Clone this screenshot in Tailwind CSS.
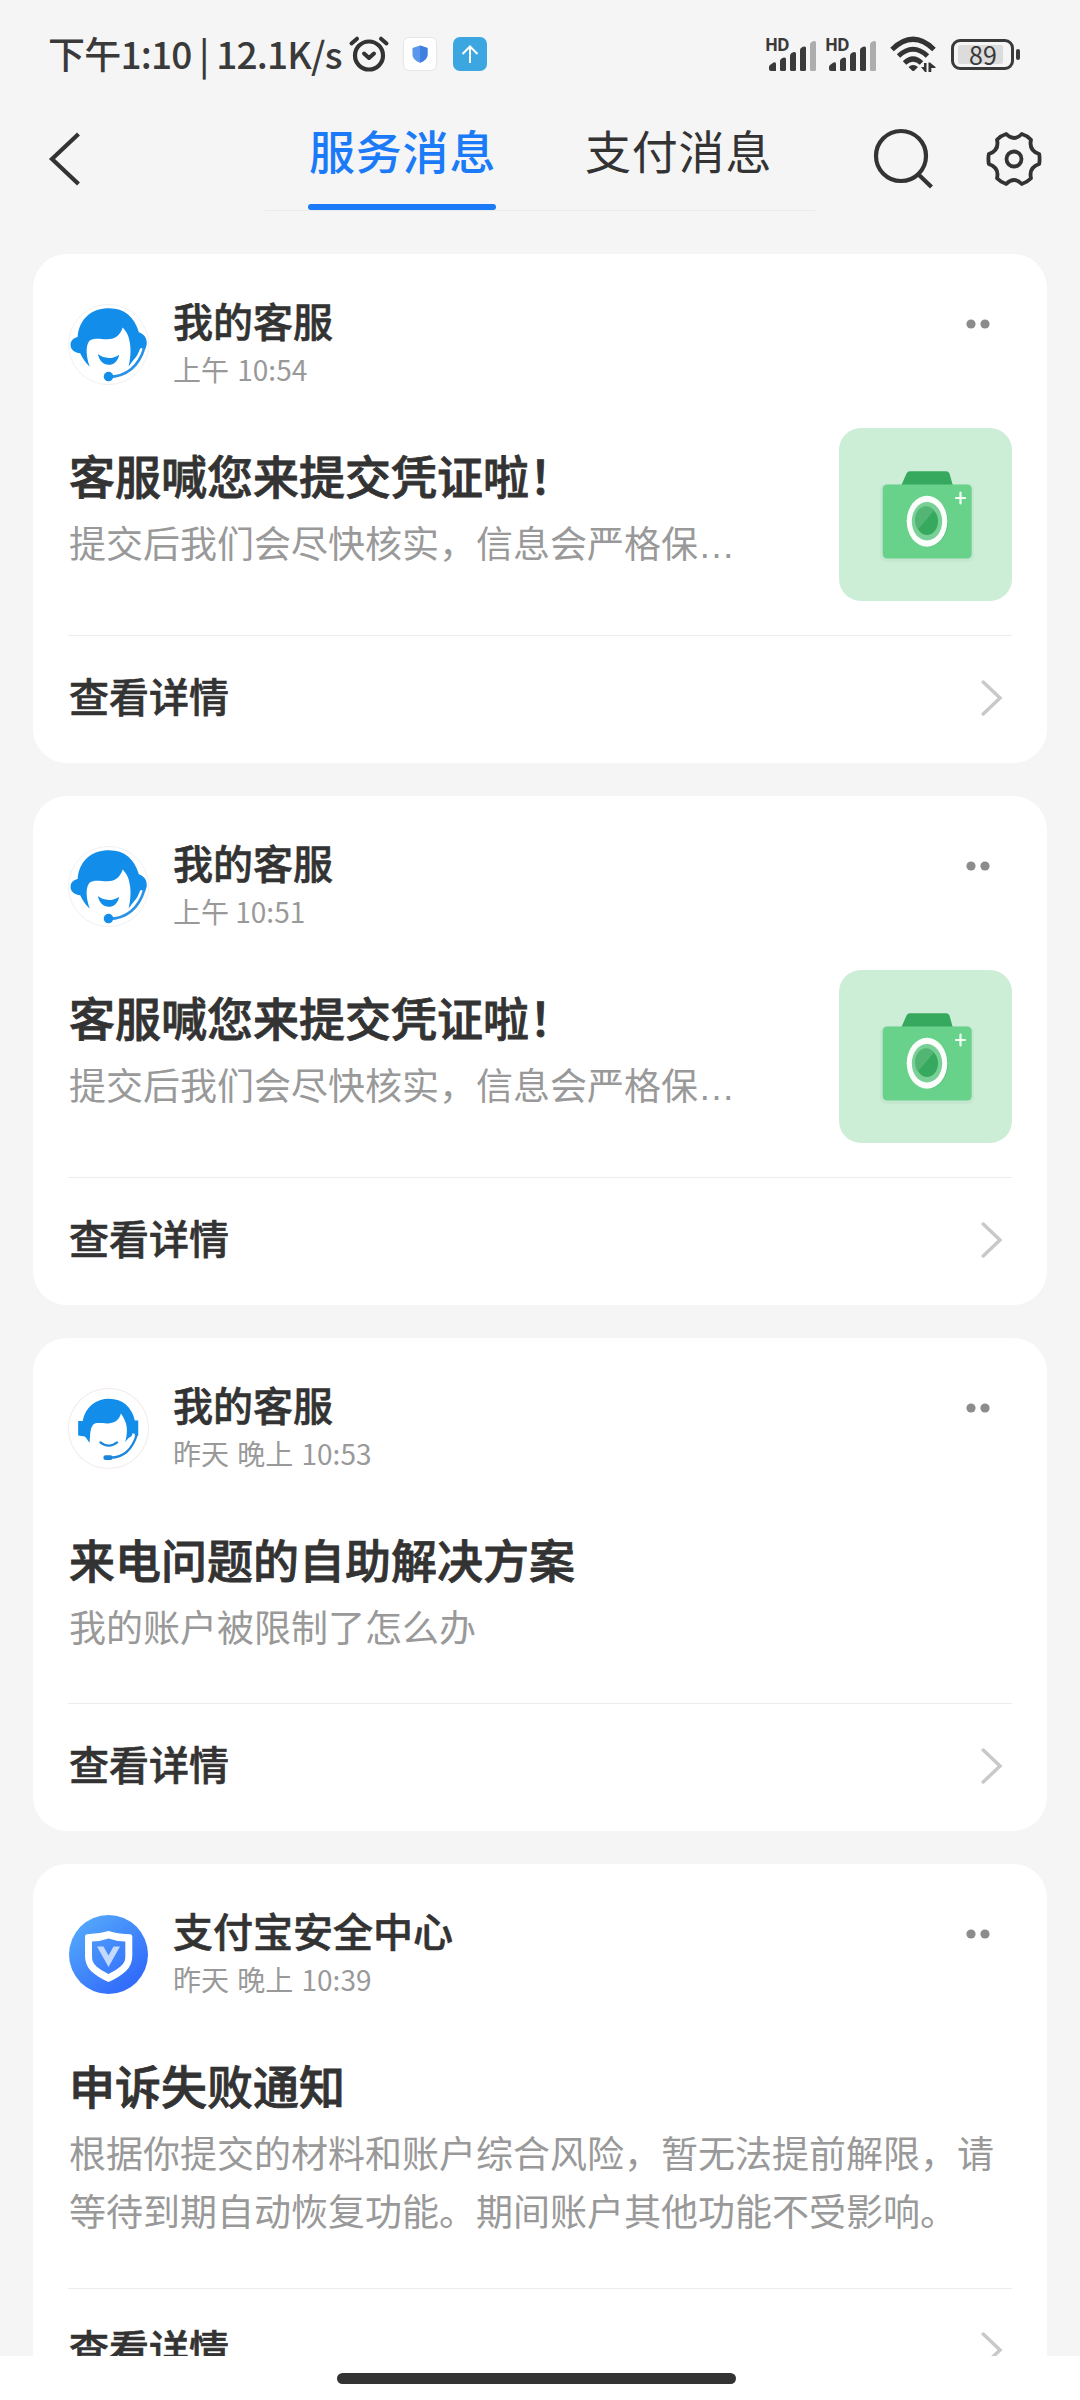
<!DOCTYPE html>
<html lang="zh-CN">
<head>
<meta charset="utf-8">
<title>服务消息</title>
<script src="https://cdn.jsdelivr.net/npm/@tailwindcss/browser@4"></script>
</head>
<body class="flex h-[2400px] w-[1080px] flex-col overflow-hidden bg-white font-['Noto_Sans_CJK_SC',sans-serif] text-[#333]">

<!-- shared icons -->
<svg class="hidden">
  <symbol id="agent" viewBox="0 0 80 80">
    <circle cx="40" cy="40" r="39.6" fill="#fff" stroke="#ececec" stroke-width=".8"/>
    <path fill="#128eea" d="M40.5 4.3C56 4.3 65.500 13 70 28C75.500 30 77.800 34 77.800 38.500C77.800 43 75 47 71.500 48.500C68 51 64 56 59.800 62C61.500 55 62.500 46 61 38C60 31 57.500 27 54 23.300C51.500 31 47 34.800 39 34.800C31 34.800 26 33 21 36.500C17 42 18 52 21.500 62C17 58 14 53 12 48.700C6 48 2.500 44.500 2.500 40.500C2.500 36 5.500 33.500 9.500 32.500C11 14 24 4.300 40.500 4.300Z"/>
    <path fill="#128eea" d="M29.500 49.500C36 54.500 44 54.500 50.500 50C49.500 56.500 45 60 40.300 60C35 60 31 56.500 29.500 49.500Z"/>
    <path fill="none" stroke="#fff" stroke-width="3" stroke-linecap="round" d="M72.500 45C67.500 58 60 66 50 69"/>
    <path fill="none" stroke="#2a92e6" stroke-width="2.600" d="M75.500 43C70 61 59 71.500 40 72"/>
    <circle cx="40" cy="71.700" r="4.700" fill="#128eea"/>
  </symbol>
  <symbol id="agent-small" viewBox="0 0 80 80">
    <circle cx="40" cy="40" r="39.500" fill="#fff" stroke="#f2ebe9" stroke-width="1"/>
    <path fill="#128eea" d="M40.500 10.700C54 10.700 63 19 66 32H69.400V47H65C61 48 59 50 56.400 53.500C58.500 47 59 38 56.500 33C55 30 54 27.500 52.200 25.300C50.500 31.500 46.500 34.800 40 35C33 35.200 28 33.500 25 36C21.500 40 22 47 21.300 54C19.500 52.500 18.500 49 16.500 47.800L10 47V32.700H14.500C17 18.500 28 10.700 40.500 10.700Z"/>
    <path fill="none" stroke="#1c86dc" stroke-width="2.200" stroke-linecap="round" d="M32 53.800C37 58 43.500 58 48.500 53.800"/>
    <path fill="none" stroke="#fff" stroke-width="2.500" d="M65 45C61 57 55 64 46 66"/>
    <path fill="none" stroke="#1c86dc" stroke-width="2.200" d="M68 46C64 59 56 68.500 42 68.800"/>
    <rect x="35" y="66.400" width="9" height="4.800" rx="2" fill="#1c86dc"/>
  </symbol>
  <symbol id="camera" viewBox="0 0 173 173">
    <rect x="41" y="56" width="94" height="78" rx="6" fill="#bfe3cc" opacity=".6"/>
    <path fill="#37a95e" d="M62 58L67.500 45.500Q68.500 43.200 71 43.200H107Q109.500 43.200 110.500 45.500L114 58Z"/>
    <rect x="43.700" y="56.500" width="89" height="74" rx="4.500" fill="#68d28b"/>
    <ellipse cx="89" cy="94" rx="20" ry="25" fill="#46b26c" opacity=".5"/>
    <ellipse cx="88" cy="93.300" rx="20.300" ry="25.500" fill="#fbfefb"/>
    <ellipse cx="88" cy="93.300" rx="15.200" ry="19.200" fill="#79d096"/>
    <ellipse cx="88" cy="93.300" rx="11" ry="13.800" fill="#37a95e"/>
    <path fill="#52b574" d="M79 101.500A11 13.800 0 0 1 95 82.500Z"/>
    <path fill="none" stroke="#f4fff6" stroke-width="2.200" stroke-linecap="round" d="M117 70h9M121.500 64.500v11"/>
  </symbol>
  <symbol id="next" viewBox="0 0 24 36">
    <path fill="none" stroke="#c9c9c9" stroke-width="3.500" stroke-linecap="round" d="M3.200 2L20 18L3.200 34"/>
  </symbol>
  <symbol id="dots" viewBox="0 0 24 10">
    <circle cx="5" cy="5" r="4.600" fill="#8c8c8c"/><circle cx="19" cy="5" r="4.600" fill="#8c8c8c"/>
  </symbol>
  <symbol id="signal" viewBox="0 0 50 34">
    <g fill="#3a3a3a">
      <path d="M2 32V30Q2 29 3 28L6.500 25.500Q9 24.500 9 27V34H4Q2 34 2 32Z"/>
      <path d="M13 24Q13 22.500 15 21.300L17 20.500Q19 20.200 19 22V32.500Q19 34 17.500 34H14.500Q13 34 13 32.500Z"/>
      <path d="M23 18.500Q23 17 25 15.800L27 15Q29 14.700 29 16.500V32.500Q29 34 27.500 34H24.500Q23 34 23 32.500Z"/>
      <path d="M33 13Q33 11.500 35 10.300L37 9.500Q39 9.200 39 11V32.500Q39 34 37.500 34H34.500Q33 34 33 32.500Z"/>
    </g>
    <path fill="#adadad" d="M43 7.500Q43 6 45 4.800L47 4Q49 3.700 49 5.500V32.500Q49 34 47.500 34H44.500Q43 34 43 32.500Z"/>
  </symbol>
</svg>

<div class="flex h-[2356px] flex-col overflow-hidden bg-[#f5f5f5]">

  <!-- status bar -->
  <div class="flex h-[108px] shrink-0 items-center pl-[48px] pr-[60px] text-[#3a3a3a]">
    <div class="w-[299px] shrink-0 whitespace-nowrap pb-[3px] text-[37px] font-medium leading-[48px] tracking-[-0.8px]">下午1:10 | 12.1K/s</div>
    <svg class="ml-[1px] h-[40px] w-[42px] shrink-0" viewBox="0 0 42 40" fill="none" stroke="#333" stroke-linecap="round" stroke-linejoin="round">
      <circle cx="21" cy="21.500" r="14" stroke-width="4.200"/>
      <path stroke-width="4" d="M3.500 9.500L9 4.700M38.500 9.500L33 4.700M16 19.500L21 24L26 19.500"/>
    </svg>
    <div class="ml-[13px] flex h-[34px] w-[34px] shrink-0 items-center justify-center rounded-[6px] border border-[#e6e6e6] bg-white">
      <svg class="h-[18px] w-[16px]" viewBox="0 0 16 18"><path fill="#5b97ec" d="M8 .5L15.500 3V9.500Q15.500 15 8 17.700Q.5 15 .5 9.500V3Z"/><path fill="#3f7fe0" d="M8 .5L15.500 3V9.500Q15.500 15 8 17.700Z"/></svg>
    </div>
    <div class="ml-[16px] flex h-[34px] w-[34px] shrink-0 items-center justify-center rounded-[7px] bg-[#3ba6e0]">
      <svg class="h-[18px] w-[18px]" viewBox="0 0 18 18" fill="none" stroke="#fff" stroke-width="2"><path d="M9 18V2M1.500 9L9 1.500L16.500 9"/></svg>
    </div>
    <div class="ml-auto flex items-center">
      <div class="relative h-[34px] w-[50px]">
        <svg class="h-[34px] w-[50px]"><use href="#signal"/></svg>
        <span class="absolute left-[-2px] top-0 font-['Open_Sans'] text-[17px] font-bold leading-[15px] tracking-[-1px]">HD</span>
      </div>
      <div class="relative ml-[10px] h-[34px] w-[50px]">
        <svg class="h-[34px] w-[50px]"><use href="#signal"/></svg>
        <span class="absolute left-[-2px] top-0 font-['Open_Sans'] text-[17px] font-bold leading-[15px] tracking-[-1px]">HD</span>
      </div>
      <svg class="ml-[13px] h-[36px] w-[48px]" viewBox="0 0 48 36" fill="none" stroke="#333" stroke-width="5">
        <path d="M2 13.500Q23 -7 44 13.500M8.500 20Q23 6.500 37.500 20M14.500 27Q23 19 31.500 27"/>
        <path fill="#333" stroke="none" d="M18.500 31Q23 27 28 31L24.500 34.500Q23.200 35.500 22 34.500Z"/>
        <path fill="#333" stroke="none" d="M31 31H34V27H36.500V36H35ZM38.500 36V26.500H40L45.500 31V32H41.300V36Z"/>
      </svg>
      <div class="ml-[13px] flex h-[31px] w-[63px] items-center rounded-[9px] border-[3px] border-[#3a3a3a] pl-[4px]">
        <div class="flex h-[19px] w-[45px] items-center justify-center rounded-[2px] bg-[#dcdcdc] pl-[5px] text-[25px] leading-[19px]">89</div>
      </div>
      <div class="ml-[2px] h-[11px] w-[4px] rounded-[2px] bg-[#3a3a3a]"></div>
    </div>
  </div>

  <!-- navigation -->
  <div class="flex h-[146px] shrink-0 items-start">
    <svg class="ml-[48px] mt-[24px] h-[54px] w-[33px]" viewBox="0 0 33 54"><path fill="none" stroke="#333" stroke-width="4.200" d="M30.500 2L4 27L30.500 52"/></svg>
    <div class="ml-[184px] flex h-[103px] w-[550px] justify-between whitespace-nowrap border-b border-[#ebebeb] pl-[43px] pr-[43px] text-[46px] leading-[60px] tracking-[0.8px]">
      <div class="flex w-[188px] flex-col justify-between pt-[11px] font-medium text-[#1b7af8]">
        <span class="pl-px">服务消息</span>
        <div class="h-[6px] w-full rounded-full bg-[#1b7af8]"></div>
      </div>
      <div class="w-[188px] pl-px pt-[11px]">支付消息</div>
    </div>
    <svg class="ml-[58px] mt-[20px] h-[62px] w-[62px]" viewBox="0 0 62 62" fill="none" stroke="#333" stroke-width="4.200"><circle cx="28" cy="28" r="25"/><path d="M45.500 46.500L58.500 59"/></svg>
    <svg class="ml-[50px] mt-[22px] h-[58px] w-[58px]" viewBox="-29 -29 58 58" fill="none" stroke="#333" stroke-width="3.800" stroke-linejoin="round">
      <circle r="7.500"/>
      <path d="M-7.800 -25Q0 -17 7.800 -25Q13 -23.500 17 -19.300Q14.500 -8.500 25.200 -5Q26 0 25.200 5Q14.500 8.500 17 19.300Q13 23.500 7.800 25Q0 17 -7.800 25Q-13 23.500 -17 19.300Q-14.500 8.500 -25.200 5Q-26 0 -25.200 -5Q-14.500 -8.500 -17 -19.300Q-13 -23.500 -7.800 -25Z"/>
    </svg>
  </div>

  <!-- messages -->
  <div class="flex flex-col gap-[33px] px-[33px]">

    <div class="h-[509px] shrink-0 rounded-[34px] bg-white px-[35px]">
      <div class="flex h-[174px]">
        <svg class="mt-[50px] h-[81px] w-[81px]"><use href="#agent"/></svg>
        <div class="ml-[24px] mt-[42px] flex flex-1 flex-col">
          <span class="text-[40px] font-medium leading-[48px] [-webkit-text-stroke:0.6px_#333]">我的客服</span>
          <span class="mt-[8px] text-[28px] leading-[34px] text-[#999] [word-spacing:2px]">上午 10:54</span>
        </div>
        <svg class="mr-[22px] mt-[65px] h-[10px] w-[24px]"><use href="#dots"/></svg>
      </div>
      <div class="flex h-[207px] justify-between">
        <div class="pl-[1px] pt-[16px]">
          <div class="text-[46px] font-medium leading-[60px] [-webkit-text-stroke:0.8px_#333]">客服喊您来提交凭证啦！</div>
          <div class="mt-[9px] text-[37px] leading-[58px] text-[#999]">提交后我们会尽快核实，信息会严格保<span class="font-['Liberation_Sans']">…</span></div>
        </div>
        <svg class="h-[173px] w-[173px] rounded-[22px] bg-[#cdeed6]"><use href="#camera"/></svg>
      </div>
      <div class="flex h-[128px] items-start justify-between border-t border-[#ececec] pl-[1px] pr-[8px]">
        <span class="pt-[29px] text-[40px] font-medium leading-[60px] [-webkit-text-stroke:0.6px_#333]">查看详情</span>
        <svg class="mt-[44px] h-[36px] w-[24px]"><use href="#next"/></svg>
      </div>
    </div>

    <div class="h-[509px] shrink-0 rounded-[34px] bg-white px-[35px]">
      <div class="flex h-[174px]">
        <svg class="mt-[50px] h-[81px] w-[81px]"><use href="#agent"/></svg>
        <div class="ml-[24px] mt-[42px] flex flex-1 flex-col">
          <span class="text-[40px] font-medium leading-[48px] [-webkit-text-stroke:0.6px_#333]">我的客服</span>
          <span class="mt-[8px] text-[28px] leading-[34px] text-[#999]">上午 10:51</span>
        </div>
        <svg class="mr-[22px] mt-[65px] h-[10px] w-[24px]"><use href="#dots"/></svg>
      </div>
      <div class="flex h-[207px] justify-between">
        <div class="pl-[1px] pt-[16px]">
          <div class="text-[46px] font-medium leading-[60px] [-webkit-text-stroke:0.8px_#333]">客服喊您来提交凭证啦！</div>
          <div class="mt-[9px] text-[37px] leading-[58px] text-[#999]">提交后我们会尽快核实，信息会严格保<span class="font-['Liberation_Sans']">…</span></div>
        </div>
        <svg class="h-[173px] w-[173px] rounded-[22px] bg-[#cdeed6]"><use href="#camera"/></svg>
      </div>
      <div class="flex h-[128px] items-start justify-between border-t border-[#ececec] pl-[1px] pr-[8px]">
        <span class="pt-[29px] text-[40px] font-medium leading-[60px] [-webkit-text-stroke:0.6px_#333]">查看详情</span>
        <svg class="mt-[44px] h-[36px] w-[24px]"><use href="#next"/></svg>
      </div>
    </div>

    <div class="h-[493px] shrink-0 rounded-[34px] bg-white px-[35px]">
      <div class="flex h-[174px]">
        <svg class="mt-[50px] h-[81px] w-[81px]"><use href="#agent-small"/></svg>
        <div class="ml-[24px] mt-[42px] flex flex-1 flex-col">
          <span class="text-[40px] font-medium leading-[48px] [-webkit-text-stroke:0.6px_#333]">我的客服</span>
          <span class="mt-[8px] text-[28px] leading-[34px] text-[#999] [word-spacing:2px]">昨天 晚上 10:53</span>
        </div>
        <svg class="mr-[22px] mt-[65px] h-[10px] w-[24px]"><use href="#dots"/></svg>
      </div>
      <div class="h-[191px] pl-[1px] pt-[16px]">
        <div class="text-[46px] font-medium leading-[60px] [-webkit-text-stroke:0.8px_#333]">来电问题的自助解决方案</div>
        <div class="mt-[9px] text-[37px] leading-[58px] text-[#999]">我的账户被限制了怎么办</div>
      </div>
      <div class="flex h-[128px] items-start justify-between border-t border-[#ececec] pl-[1px] pr-[8px]">
        <span class="pt-[29px] text-[40px] font-medium leading-[60px] [-webkit-text-stroke:0.6px_#333]">查看详情</span>
        <svg class="mt-[44px] h-[36px] w-[24px]"><use href="#next"/></svg>
      </div>
    </div>

    <div class="h-[552px] shrink-0 rounded-[34px] bg-white px-[35px]">
      <div class="flex h-[174px]">
        <svg class="ml-[1px] mt-[51px] h-[79px] w-[79px]" viewBox="0 0 79 79">
          <defs><linearGradient id="sky" x1=".1" y1=".1" x2=".8" y2=".95"><stop offset="0" stop-color="#54a8fb"/><stop offset="1" stop-color="#2f68fb"/></linearGradient></defs>
          <circle cx="39.500" cy="39.500" r="39.500" fill="url(#sky)"/>
          <path fill="#fff" fill-rule="evenodd" d="M39.500 16Q51 19.300 61.500 19.300Q63.300 19.500 63.300 21.500V41Q63.300 50 57 56Q50 62.500 39.500 67Q29 62.500 22 56Q16 50 16 41V21.500Q16 19.500 18 19.300Q29 19.300 39.500 16ZM39.500 23.500Q32 26.300 23 26.500V42Q23 47.500 27.500 51.500Q32 55.500 39.500 59Q47 55.500 51.500 51.500Q56.300 47.500 56.300 42V26.500Q47 26.300 39.500 23.500Z"/>
          <path fill="#c3dafe" d="M28 31.500H34.500L39.500 40.500L44.500 31.500H51L39.500 52Z"/>
        </svg>
        <div class="ml-[25px] mt-[42px] flex flex-1 flex-col">
          <span class="text-[40px] font-medium leading-[48px] [-webkit-text-stroke:0.6px_#333]">支付宝安全中心</span>
          <span class="mt-[8px] text-[28px] leading-[34px] text-[#999] [word-spacing:2px]">昨天 晚上 10:39</span>
        </div>
        <svg class="mr-[22px] mt-[65px] h-[10px] w-[24px]"><use href="#dots"/></svg>
      </div>
      <div class="h-[250px] pl-[1px] pt-[16px]">
        <div class="text-[46px] font-medium leading-[60px] [-webkit-text-stroke:0.8px_#333]">申诉失败通知</div>
        <div class="mt-[9px] whitespace-nowrap text-[37px] leading-[58px] text-[#999]">根据你提交的材料和账户综合风险，暂无法提前解限，请<br>等待到期自动恢复功能。期间账户其他功能不受影响。</div>
      </div>
      <div class="flex h-[128px] items-start justify-between border-t border-[#ececec] pl-[1px] pr-[8px]">
        <span class="pt-[28px] text-[40px] font-medium leading-[60px] [-webkit-text-stroke:0.6px_#333]">查看详情</span>
        <svg class="mt-[43px] h-[36px] w-[24px]"><use href="#next"/></svg>
      </div>
    </div>
  </div>
</div>

<!-- gesture bar -->
<div class="flex h-[44px] shrink-0 justify-center bg-white pr-[7px] pt-[17px]">
  <div class="h-[11px] w-[399px] rounded-full bg-[#333]"></div>
</div>
</body>
</html>
